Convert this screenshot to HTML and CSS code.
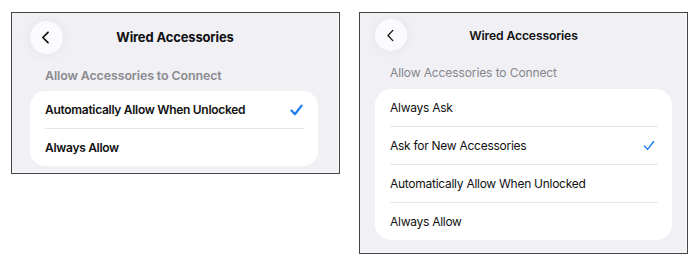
FILE: index.html
```html
<!DOCTYPE html>
<html lang="en">
<head>
<meta charset="utf-8">
<title>Wired Accessories</title>
<link rel="stylesheet" href="styles.css">
</head>
<body>
<main class="page">
  <section class="phone phone-a">
    <header class="nav">
      <button class="back" aria-label="Back">
        <svg viewBox="0 0 10 14" width="9" height="13"><path d="M7.8 1.2 L2 7 L7.8 12.8" fill="none" stroke="#111" stroke-width="1.9" stroke-linecap="round" stroke-linejoin="round"/></svg>
      </button>
      <h1 class="title">Wired Accessories</h1>
    </header>
    <h2 class="label">Allow Accessories to Connect</h2>
    <ul class="list">
      <li class="row"><span>Automatically Allow When Unlocked</span>
        <svg class="check" viewBox="0 0 13 12" width="13" height="12"><path d="M1.5 6.6 L4.9 10.2 L11.6 1.6" fill="none" stroke="#1b7bf3" stroke-width="2.2" stroke-linecap="round" stroke-linejoin="round"/></svg>
      </li>
      <li class="row"><span>Always Allow</span></li>
    </ul>
  </section>

  <section class="phone phone-b">
    <header class="nav">
      <button class="back" aria-label="Back">
        <svg viewBox="0 0 10 14" width="9" height="13"><path d="M7.6 1.3 L2.2 7 L7.6 12.7" fill="none" stroke="#111" stroke-width="1.4" stroke-linecap="round" stroke-linejoin="round"/></svg>
      </button>
      <h1 class="title">Wired Accessories</h1>
    </header>
    <h2 class="label">Allow Accessories to Connect</h2>
    <ul class="list">
      <li class="row"><span>Always Ask</span></li>
      <li class="row"><span>Ask for New Accessories</span>
        <svg class="check" viewBox="0 0 13 12" width="12" height="11"><path d="M1.5 6.6 L4.9 10.2 L11.6 1.6" fill="none" stroke="#1b7bf3" stroke-width="1.5" stroke-linecap="round" stroke-linejoin="round"/></svg>
      </li>
      <li class="row"><span>Automatically Allow When Unlocked</span></li>
      <li class="row"><span>Always Allow</span></li>
    </ul>
  </section>
</main>
</body>
</html>
```

FILE: styles.css
```css
* { box-sizing: border-box; }

html, body {
  margin: 0;
  padding: 0;
  background: #ffffff;
}

body {
  font-family: Inter, "Noto Sans", "Liberation Sans", sans-serif;
  color: #111111;
}

.page {
  display: flex;
  align-items: flex-start;
  gap: 19px;
  padding: 12px 0 0 11px;
}

.phone {
  width: 329px;
  background: #f0f0f5;
  border: 1px solid #454545;
  box-shadow: inset -2px -1px 0 #f7f7fa;
  display: flex;
  flex-direction: column;
}

.phone-a {
  height: 162px;
  padding: 8px 21px 0 18px;
}

.phone-b {
  height: 242px;
  padding: 6px 15px 0 15px;
}

.nav {
  position: relative;
  display: flex;
  align-items: center;
  height: 33px;
}

.phone-b .nav { height: 32px; }

.back {
  width: 33px;
  height: 33px;
  border: none;
  padding: 0 2px 0 0;
  border-radius: 50%;
  background: #fbfbfd;
  box-shadow: 0 0 14px rgba(0, 0, 0, 0.06);
  display: flex;
  align-items: center;
  justify-content: center;
  flex: none;
}

.phone-b .back {
  width: 32px;
  height: 32px;
}

.title {
  position: absolute;
  left: 0;
  right: 0;
  margin: 0;
  text-align: center;
  font-size: 13px;
  font-weight: 700;
  letter-spacing: -0.15px;
  pointer-events: none;
}

.phone-a .title { padding-left: 2px; top: 8px; }
.phone-b .title { font-size: 12.2px; font-weight: 600; top: 9px; }

.label {
  margin: 0;
  padding: 14px 0 0 15px;
  height: 37px;
  font-size: 12.4px;
  font-weight: 600;
  color: #8a8a8f;
  letter-spacing: -0.1px;
}

.phone-b .label {
  padding-top: 14px;
  height: 38px;
  font-size: 12px;
  font-weight: 400;
  color: #86868b;
}

.list {
  list-style: none;
  margin: 0;
  padding: 0 14px 0 15px;
  background: #ffffff;
  border-radius: 15px;
}

.phone-b .list {
  border-radius: 16px;
}

.row {
  height: 38px;
  display: flex;
  align-items: center;
  justify-content: space-between;
  border-top: 1px solid #e4e4e9;
  font-size: 12px;
  font-weight: 600;
  letter-spacing: -0.3px;
}

.row:first-child {
  border-top: none;
  height: 37px;
}

.phone-b .row {
  font-size: 12px;
  font-weight: 400;
  letter-spacing: -0.27px;
}

.check {
  flex: none;
  margin-right: 1px;
}

.phone-b .check { margin-right: 3px; }
```
